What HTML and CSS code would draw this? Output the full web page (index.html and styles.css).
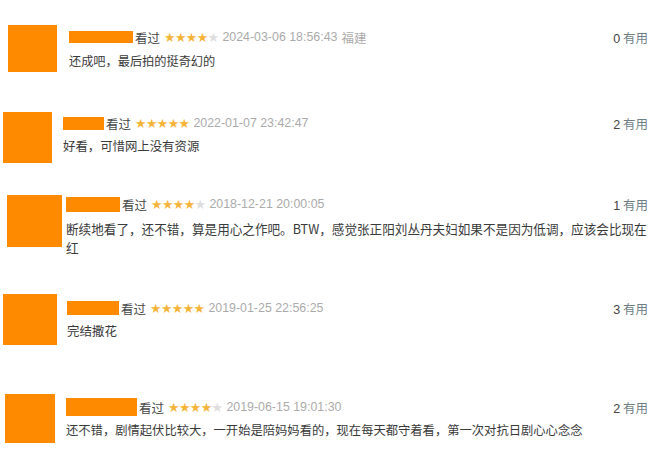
FILE: index.html
```html
<!DOCTYPE html>
<html lang="zh-CN">
<head>
<meta charset="utf-8">
<link rel="stylesheet" href="styles.css">
</head>
<body>
<div class="list">
  <div class="review r1">
    <div class="avatar"></div>
    <div class="body">
      <div class="head">
        <span class="name"></span><span class="seen">看过</span><span class="stars">★★★★<i>★</i></span><span class="time">2024-03-06 18:56:43</span><span class="loc">福建</span>
        <span class="useful"><b>0</b> 有用</span>
      </div>
      <p class="text">还成吧，最后拍的挺奇幻的</p>
    </div>
  </div>
  <div class="review r2">
    <div class="avatar"></div>
    <div class="body">
      <div class="head">
        <span class="name"></span><span class="seen">看过</span><span class="stars">★★★★★</span><span class="time">2022-01-07 23:42:47</span>
        <span class="useful"><b>2</b> 有用</span>
      </div>
      <p class="text">好看，可惜网上没有资源</p>
    </div>
  </div>
  <div class="review r3">
    <div class="avatar"></div>
    <div class="body">
      <div class="head">
        <span class="name"></span><span class="seen">看过</span><span class="stars">★★★★<i>★</i></span><span class="time">2018-12-21 20:00:05</span>
        <span class="useful"><b>1</b> 有用</span>
      </div>
      <p class="text">断续地看了，还不错，算是用心之作吧。BTW，感觉张正阳刘丛丹夫妇如果不是因为低调，应该会比现在红</p>
    </div>
  </div>
  <div class="review r4">
    <div class="avatar"></div>
    <div class="body">
      <div class="head">
        <span class="name"></span><span class="seen">看过</span><span class="stars">★★★★★</span><span class="time">2019-01-25 22:56:25</span>
        <span class="useful"><b>3</b> 有用</span>
      </div>
      <p class="text">完结撒花</p>
    </div>
  </div>
  <div class="review r5">
    <div class="avatar"></div>
    <div class="body">
      <div class="head">
        <span class="name"></span><span class="seen">看过</span><span class="stars">★★★★<i>★</i></span><span class="time">2019-06-15 19:01:30</span>
        <span class="useful"><b>2</b> 有用</span>
      </div>
      <p class="text">还不错，剧情起伏比较大，一开始是陪妈妈看的，现在每天都守着看，第一次对抗日剧心心念念</p>
    </div>
  </div>
</div>
</body>
</html>
```

FILE: styles.css
```css
html, body {
  margin: 0;
  padding: 0;
  background: #fff;
}

body {
  width: 660px;
  height: 462px;
  overflow: hidden;
  font-family: "Noto Sans CJK SC", "Liberation Sans", sans-serif;
  color: #3a3a3a;
}

.list {
  padding-top: 25px;
}

.review {
  display: flex;
  align-items: flex-start;
  box-sizing: border-box;
  height: var(--h);
  padding-left: var(--left);
  padding-right: 12px;
  gap: var(--gap);
}

.avatar {
  flex: none;
  width: var(--aw);
  height: var(--ah);
  background: #fe8a00;
}

.body {
  flex: 1;
  min-width: 0;
  margin-top: var(--ht);
}

.head {
  display: flex;
  align-items: center;
  height: 20px;
  font-size: 12.5px;
  white-space: nowrap;
}

.name {
  width: var(--nw);
  height: var(--nh);
  background: #fe8a00;
}

.seen {
  margin-left: 2px;
  color: #494949;
}

.stars {
  margin-left: 4px;
  font-family: "DejaVu Sans", sans-serif;
  font-size: 12.8px;
  letter-spacing: -0.6px;
  color: #f4b439;
}

.stars i {
  font-style: normal;
  color: #dedede;
}

.time {
  margin-left: 4px;
  font-family: "Liberation Sans", sans-serif;
  font-size: 12.4px;
  color: #ababab;
}

.loc {
  margin-left: 4px;
  color: #ababab;
}

.useful {
  margin-left: auto;
  color: #6f7f86;
  font-size: 12.5px;
}

.useful b {
  font-weight: normal;
  font-family: "Liberation Sans", sans-serif;
  color: #444;
}

.text {
  margin: var(--cg) 0 0;
  font-size: var(--fs);
  line-height: 19px;
  color: #3a3a3a;
}

.r1 { --h: 87px; --left: 8px; --aw: 49px; --ah: 47px; --gap: 12px; --nw: 64px; --nh: 12px; --ht: 2px; --cg: 5px; --fs: 12.2px; }
.r2 { --h: 83px; --left: 3px; --aw: 49px; --ah: 51px; --gap: 11px; --nw: 41px; --nh: 13px; --ht: 1px; --cg: 4px; --fs: 12.4px; }
.r3 { --h: 99px; --left: 7px; --aw: 55px; --ah: 52px; --gap: 4px; --nw: 54px; --nh: 15px; --ht: -1px; --cg: 5px; --fs: 12.6px; }
.r4 { --h: 100px; --left: 3px; --aw: 54px; --ah: 51px; --gap: 10px; --nw: 52px; --nh: 14px; --ht: 4px; --cg: 3px; --fs: 12.5px; }
.r5 { --h: 68px; --left: 5px; --aw: 50px; --ah: 49px; --gap: 11px; --nw: 71px; --nh: 18px; --ht: 3px; --cg: 4px; --fs: 12.3px; }
```
